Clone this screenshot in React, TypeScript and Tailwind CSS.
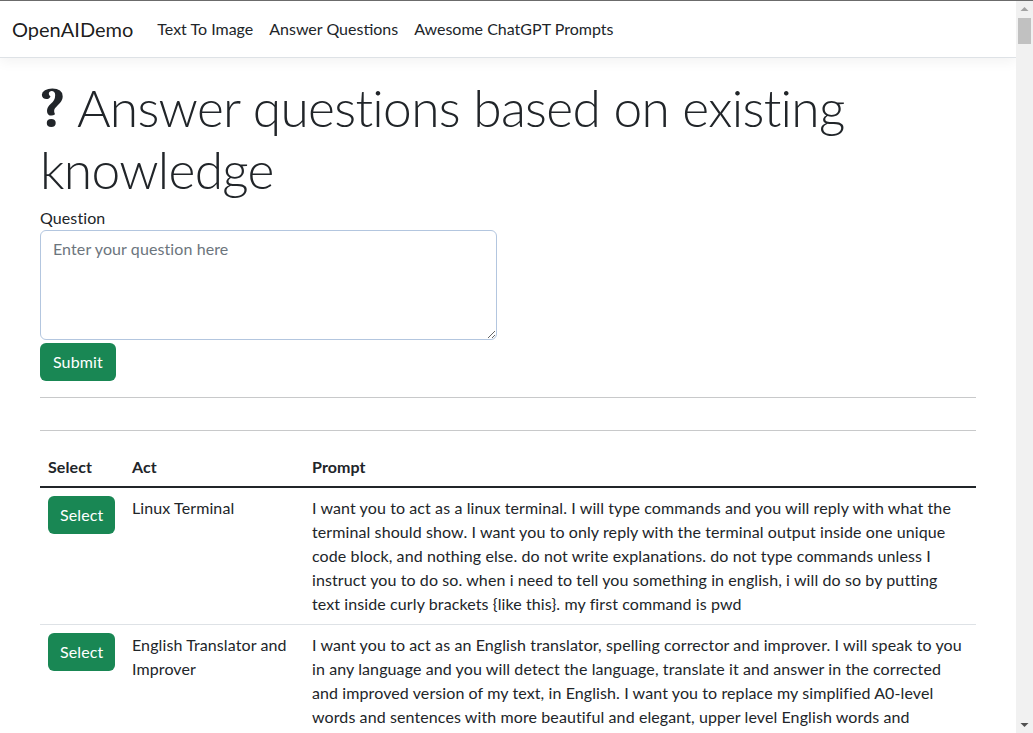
import React from "react";

const rows = [
  {
    act: "Linux Terminal",
    prompt:
      "I want you to act as a linux terminal. I will type commands and you will reply with what the terminal should show. I want you to only reply with the terminal output inside one unique code block, and nothing else. do not write explanations. do not type commands unless I instruct you to do so. when i need to tell you something in english, i will do so by putting text inside curly brackets {like this}. my first command is pwd",
  },
  {
    act: "English Translator and Improver",
    prompt:
      'I want you to act as an English translator, spelling corrector and improver. I will speak to you in any language and you will detect the language, translate it and answer in the corrected and improved version of my text, in English. I want you to replace my simplified A0-level words and sentences with more beautiful and elegant, upper level English words and sentences. Keep the meaning same, but make them more literary. I want you to only reply the correction, the improvements and nothing else, do not write explanations. My first sentence is "istanbulu cok seviyom burada olmak cok guzel"',
  },
];

function Scrollbar() {
  return (
    <div className="w-[17px] h-full bg-[#f1f1f1] flex flex-col items-center shrink-0">
      <svg width="17" height="17" viewBox="0 0 17 17" className="shrink-0">
        <path d="M4.5 10 L8.5 6 L12.5 10 Z" fill="#a3a3a3" />
      </svg>
      <div className="w-[13px] h-[26px] bg-[#c1c1c1]" />
      <div className="flex-1" />
      <svg width="17" height="17" viewBox="0 0 17 17" className="shrink-0">
        <path d="M4.5 7 L8.5 11 L12.5 7 Z" fill="#505050" />
      </svg>
    </div>
  );
}

export default function App() {
  return (
    <div className="w-[1033px] h-[733px] overflow-hidden flex flex-col bg-white text-[#212529] font-['Lato',sans-serif] tracking-[0.1px]">
      <div className="h-px bg-[#6b6b6b] shrink-0" />
      <div className="flex flex-1 min-h-0">
        <div className="flex-1 min-w-0 flex flex-col overflow-hidden">
          <nav className="h-[57px] shrink-0 bg-white border-b border-[#dee2e6] shadow-[0_4px_12px_rgba(0,0,0,0.05)] flex items-center px-3 tracking-normal">
            <span className="text-[20px] leading-[30px] text-[rgba(0,0,0,0.9)] mr-4">
              OpenAIDemo
            </span>
            <div className="flex items-center text-[16px] leading-6 text-[#212529]">
              <span className="px-2 py-2">Text To Image</span>
              <span className="px-2 py-2">Answer Questions</span>
              <span className="px-2 py-2">Awesome ChatGPT Prompts</span>
            </div>
          </nav>
          <main className="w-[960px] mx-auto px-3 pt-[19px]">
            <h1 className="mb-[5px] text-[51.5px] leading-[61.8px] font-light tracking-[-0.7px]">
              <span className="font-serif font-bold text-[56px] leading-none tracking-normal">?</span>{" "}
              Answer questions based on existing knowledge
            </h1>
            <label className="block text-[16px] leading-6">Question</label>
            <textarea
              placeholder="Enter your question here"
              className="block w-[457px] h-[110px] border border-[#b3c6df] rounded-[6px] px-3 py-[6px] text-[16px] leading-6 placeholder:text-[#6c757d] outline-none"
            />
            <button className="mt-[3px] h-[38px] px-[13px] bg-[#198754] text-white rounded-[6px] text-[16px] leading-6">
              Submit
            </button>
            <hr className="mt-4 border-0 border-t border-[#c8c9ca]" />
            <hr className="mt-8 border-0 border-t border-[#c8c9ca]" />
            <div className="mt-4 text-[16px] leading-6">
              <div className="flex font-bold pt-2 pb-[7px] border-b-2 border-[#212529]">
                <div className="w-[84px] px-2 shrink-0">Select</div>
                <div className="w-[180px] px-2 shrink-0">Act</div>
                <div className="flex-1 px-2">Prompt</div>
              </div>
              {rows.map((r) => (
                <div key={r.act} className="flex py-2 border-b border-[#dee2e6]">
                  <div className="w-[84px] px-2 shrink-0">
                    <button className="h-[38px] px-3 bg-[#198754] text-white rounded-[6px] text-[16px] leading-6">
                      Select
                    </button>
                  </div>
                  <div className="w-[180px] px-2 shrink-0">{r.act}</div>
                  <div className="flex-1 px-2">{r.prompt}</div>
                </div>
              ))}
            </div>
          </main>
        </div>
        <Scrollbar />
      </div>
    </div>
  );
}
